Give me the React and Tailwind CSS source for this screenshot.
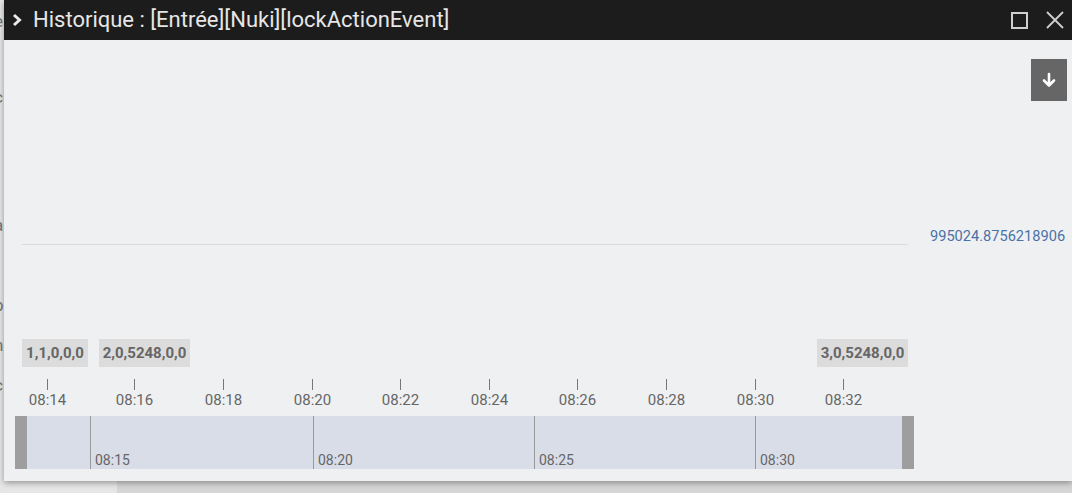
import React from "react";

const ticks = [
  [47, "08:14"],
  [134, "08:16"],
  [223, "08:18"],
  [312, "08:20"],
  [400, "08:22"],
  [489, "08:24"],
  [577, "08:26"],
  [666, "08:28"],
  [755, "08:30"],
  [843, "08:32"],
];

const navLines = [
  [90, "08:15"],
  [313, "08:20"],
  [534, "08:25"],
  [755, "08:30"],
];

const flags = [
  [22, 66, "1,1,0,0,0"],
  [99, 91, "2,0,5248,0,0"],
  [817, 91, "3,0,5248,0,0"],
];

// bits of the page that peek out from behind the window
const behind = [
  ["e", "mt-[12px]"],
  ["c", "mt-[58px]"],
  ["a", "mt-[110px]"],
  ["p", "mt-[62px]"],
  ["n", "mt-[22px]"],
  ["c", "mt-[22px]"],
];

export default function App() {
  return (
    <div
      className="relative w-[1072px] h-[493px] overflow-hidden bg-[#d6d6d6]"
      style={{ fontFamily: "Roboto, 'Liberation Sans', sans-serif" }}
    >
      <div className="w-[123px] h-[493px] bg-[#e6e6e6] text-[#777] text-[17px] leading-[18px] flex flex-col -ml-[6px]">
        {behind.map(([c, m], i) => (
          <span key={i} className={m}>{c}</span>
        ))}
      </div>

      {/* modal window */}
      <div className="absolute left-[4px] top-0 w-[1068px] h-[481px] flex flex-col bg-[#eff0f2] shadow-[0_2px_6px_rgba(0,0,0,0.35)]">
        <div className="h-[40px] flex items-center bg-[#1c1c1c] text-[#e6e6e6]">
          <svg width="14" height="16" viewBox="0 0 14 16" className="ml-[6px]">
            <path d="M4 3 L9.5 8 L4 13" fill="none" stroke="#eaeaea" strokeWidth="3" />
          </svg>
          <span className="ml-[9px] text-[22px] leading-none">Historique : [Entrée][Nuki][lockActionEvent]</span>
          <div className="ml-auto flex items-center gap-[18px] mr-[8px]">
            <div className="w-[17px] h-[17px] border-[2px] border-[#cfcfcf]" />
            <svg width="18" height="18" viewBox="0 0 18 18">
              <path d="M1 1 L17 17 M17 1 L1 17" stroke="#cfcfcf" strokeWidth="1.8" />
            </svg>
          </div>
        </div>

        <div className="relative flex-1">
          <button className="absolute right-[5px] top-[19px] w-[36px] h-[42px] bg-[#666] flex items-center justify-center">
            <svg width="16" height="16" viewBox="0 0 16 16">
              <path d="M8 2 V13 M3 8.5 L8 13.5 L13 8.5" fill="none" stroke="#fff" strokeWidth="2.6" strokeLinecap="round" strokeLinejoin="round" />
            </svg>
          </button>

          <svg width="1068" height="441" viewBox="4 40 1068 441" className="block">
            <line x1="22" y1="244.5" x2="908" y2="244.5" stroke="#dadbdd" />
            <text x="930" y="241" fill="#4a72a6" fontSize="14.6">995024.8756218906</text>

            {flags.map(([x, w, t]) => (
              <g key={t}>
                <rect x={x} y="339" width={w} height="28" fill="#dcdcdc" />
                <text x={x + w / 2} y="358" textAnchor="middle" fill="#666" fontSize="15" fontWeight="700">{t}</text>
              </g>
            ))}

            {ticks.map(([x, t]) => (
              <g key={t}>
                <line x1={x + 0.5} y1="379" x2={x + 0.5} y2="390" stroke="#777" />
                <text x={x + 0.5} y="405" textAnchor="middle" fill="#666" fontSize="15">{t}</text>
              </g>
            ))}

            <rect x="15" y="416" width="899" height="53" fill="#d8dde8" />
            <rect x="15" y="416" width="12" height="53" fill="#9e9e9e" />
            <rect x="902" y="416" width="12" height="53" fill="#9e9e9e" />
            {navLines.map(([x, t]) => (
              <g key={t}>
                <line x1={x + 0.5} y1="416" x2={x + 0.5} y2="469" stroke="#999" />
                <text x={x + 5} y="465" fill="#666" fontSize="14">{t}</text>
              </g>
            ))}
          </svg>
        </div>
      </div>
    </div>
  );
}
